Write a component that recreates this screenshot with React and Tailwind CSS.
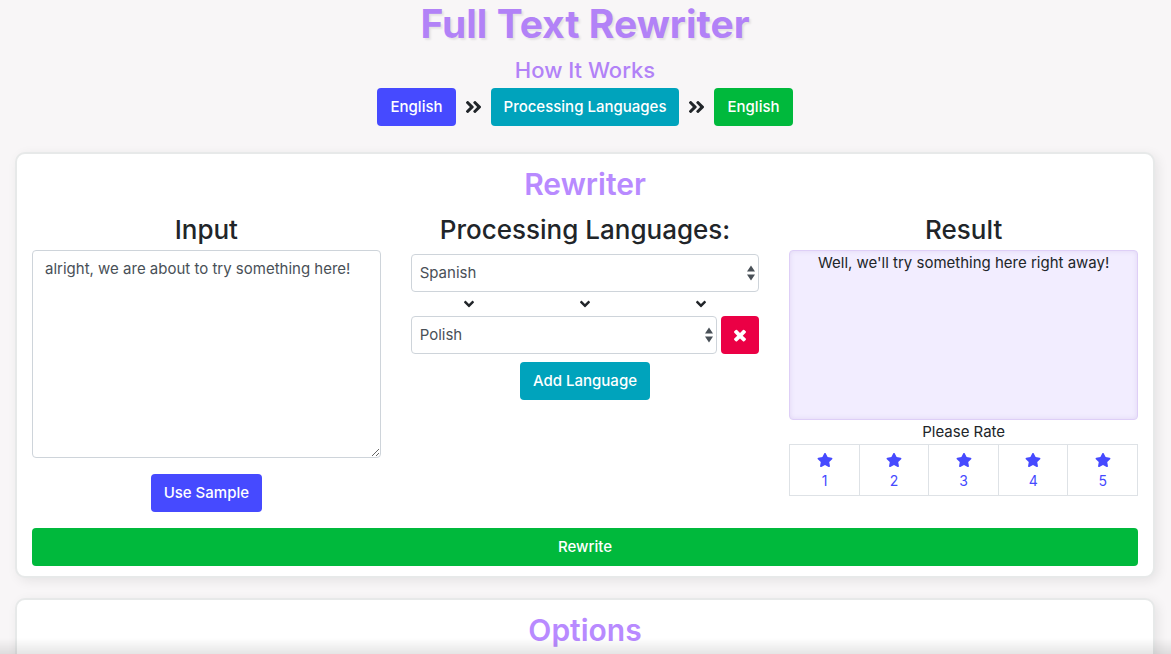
import React, { useState } from "react";
import { FaAngleDoubleRight, FaAngleDown, FaStar } from "react-icons/fa";

const LANGUAGES = ["Spanish", "Polish", "German", "French", "Italian"];

const BUTTON =
  "h-[38px] rounded px-[13px] text-[15px] font-medium whitespace-nowrap text-white";

function LanguageSelect({ label, value, onChange }) {
  return (
    <div className="relative min-w-0 flex-1">
      <select
        aria-label={label}
        value={value}
        onChange={(e) => onChange(e.target.value)}
        className="block h-[38px] w-full appearance-none rounded border border-[#ced4da] bg-white pr-6 pl-2 text-[15px] text-[#495057]"
      >
        {LANGUAGES.map((name) => (
          <option key={name}>{name}</option>
        ))}
      </select>
      <svg
        viewBox="0 0 8 16"
        className="pointer-events-none absolute top-[11px] right-1 h-4 w-2"
        aria-hidden="true"
      >
        <path fill="#495057" d="M4 .5 0 6.5h8zM4 15.500 0 9.500h8z" />
      </svg>
    </div>
  );
}

function CrossIcon() {
  return (
    <svg viewBox="0 0 1792 1792" className="size-[18px]" fill="currentColor" aria-hidden="true">
      <path d="M1490 1322q0 40-28 68l-136 136q-28 28-68 28t-68-28l-294-294-294 294q-28 28-68 28t-68-28l-136-136q-28-28-28-68t28-68l294-294-294-294q-28-28-28-68t28-68l136-136q28-28 68-28t68 28l294 294 294-294q28-28 68-28t68 28l136 136q28 28 28 68t-28 68l-294 294 294 294q28 28 28 68z" />
    </svg>
  );
}

function Card({ title, children }) {
  return (
    <section className="rounded-[10px] border-2 border-[#e7e9e9] bg-white px-[15px] py-2.5 shadow-[3px_3px_12px_rgba(0,0,0,0.08)]">
      <h2 className="text-center text-[30px] leading-10 font-semibold text-[#b88aff]">
        {title}
      </h2>
      {children}
    </section>
  );
}

function ColumnTitle({ children }) {
  return (
    <h3 className="text-center text-[26px] leading-9 font-medium">
      {children}
    </h3>
  );
}

export default function App() {
  const [text, setText] = useState("alright, we are about to try something here!");
  const [first, setFirst] = useState("Spanish");
  const [second, setSecond] = useState("Polish");

  return (
    <div className="h-screen overflow-hidden bg-[#f8f6f7] pr-px font-['Inter','Liberation_Sans',sans-serif] text-[15px] leading-6 text-[#212529]">
      <header className="flex flex-col items-center text-[#b282f7]">
        <h1 className="text-[39px] leading-12 font-bold [text-shadow:2px_2px_2px_rgba(0,0,0,0.08)]">
          Full Text Rewriter
        </h1>
        <h2 className="mt-1.5 mb-0.5 text-[22px] leading-8 font-medium">
          How It Works
        </h2>
        <div className="flex items-center gap-[9px] text-[#212529]">
          <button type="button" className={`${BUTTON} bg-[#464aff]`}>
            English
          </button>
          <FaAngleDoubleRight className="h-5 w-[17px]" />
          <button type="button" className={`${BUTTON} bg-[#00a3bc]`}>
            Processing Languages
          </button>
          <FaAngleDoubleRight className="h-5 w-[17px]" />
          <button type="button" className={`${BUTTON} bg-[#00b93c]`}>
            English
          </button>
        </div>
      </header>

      <main className="mt-[26px] flex flex-col gap-5 px-[15px]">
        <Card title="Rewriter">
          <div className="mt-2 grid grid-cols-3 gap-[30px]">
            <div className="flex flex-col items-center">
              <ColumnTitle>Input</ColumnTitle>
              <textarea
                aria-label="Input"
                value={text}
                onChange={(e) => setText(e.target.value)}
                className="mt-0.5 block h-52 w-full resize-y rounded border border-[#ced4da] bg-white px-3 py-1.5 text-[15px] leading-6 text-[#495057]"
              />
              <button type="button" className={`${BUTTON} mt-4 bg-[#464aff]`}>
                Use Sample
              </button>
            </div>

            <div className="flex flex-col items-center">
              <ColumnTitle>Processing Languages:</ColumnTitle>
              <div className="mt-1.5 flex w-full">
                <LanguageSelect
                  label="First language"
                  value={first}
                  onChange={setFirst}
                />
              </div>
              <div className="flex h-6 w-full items-center justify-around">
                <FaAngleDown className="size-4" />
                <FaAngleDown className="size-4" />
                <FaAngleDown className="size-4" />
              </div>
              <div className="flex w-full gap-1">
                <LanguageSelect
                  label="Second language"
                  value={second}
                  onChange={setSecond}
                />
                <button
                  type="button"
                  aria-label="Remove language"
                  className="flex size-[38px] items-center justify-center rounded bg-[#eb0045] text-white"
                >
                  <CrossIcon />
                </button>
              </div>
              <button type="button" className={`${BUTTON} mt-2 bg-[#00a3bc]`}>
                Add Language
              </button>
            </div>

            <div className="flex flex-col">
              <ColumnTitle>Result</ColumnTitle>
              <div className="mt-0.5 h-[170px] rounded border border-[#decff7] bg-[#f2edff] text-center shadow-[inset_0_0_5px_rgba(100,60,160,0.12)]">
                Well, we'll try something here right away!
              </div>
              <p className="text-center">Please Rate</p>
              <div className="flex divide-x divide-[#dee2e6] border border-[#dee2e6]">
                {[1, 2, 3, 4, 5].map((rate) => (
                  <button
                    key={rate}
                    type="button"
                    className="flex h-[50px] flex-1 flex-col items-center gap-[3px] pt-[7px] text-sm text-[#464aff]"
                  >
                    <FaStar className="size-4" />
                    {rate}
                  </button>
                ))}
              </div>
            </div>
          </div>
          <button type="button" className={`${BUTTON} mt-4 block w-full bg-[#00b93c]`}>
            Rewrite
          </button>
        </Card>

        <Card title="Options">
          <div className="h-24" />
        </Card>
      </main>

      <div className="pointer-events-none fixed inset-x-0 bottom-0 h-4 bg-linear-to-t from-black/10 to-transparent" />
    </div>
  );
}
